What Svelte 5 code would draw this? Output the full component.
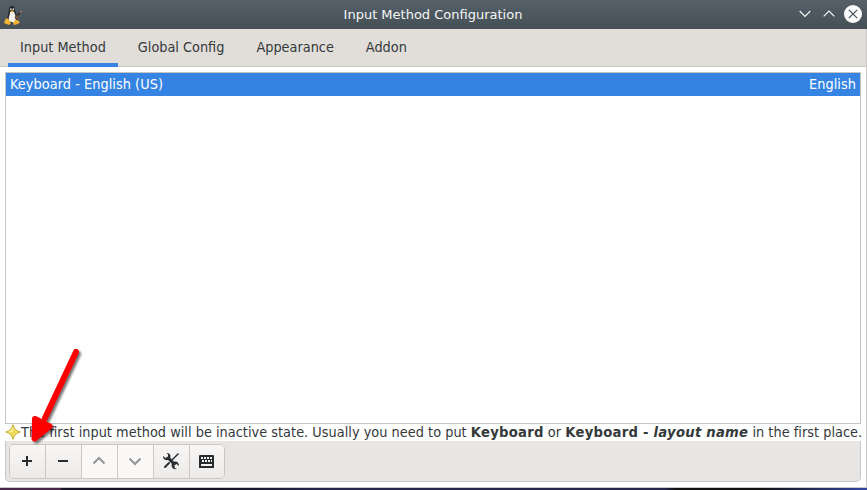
<script>
  const tabs = ['Input Method', 'Global Config', 'Appearance', 'Addon'];
  const tools = ['add', 'remove', 'up', 'down', 'configure', 'keyboard'];
</script>

<div class="screen">
  <div class="window">
    <header>
      <svg class="tux" width="22" height="22" viewBox="0 0 22 22">
        <path d="M7 5C7 1 13 1 13 5C13 9 16 11 15 17L12 20L6 18C4 13 7 10 7 5Z" fill="#202426" />
        <path d="M8 8L12 8C14 12 15 16 12 19L7 17C6 13 8 12 8 8Z" fill="#f3f2ed" />
        <circle cx="8.8" cy="5.2" r=".9" fill="#d8d8cf" /><circle cx="11.4" cy="5.2" r=".9" fill="#d8d8cf" />
        <path d="M8 7L10 6.2L12.5 7L10 8.5Z" fill="#e8b54e" />
        <path d="M5 14L3 16L2 19L7 21L9 19L7 16ZM13 16L11 19L12 21L16 20L18 18L15 16Z" fill="#f1b336" />
        <path d="M13 14L19 7.5" stroke="#302b28" stroke-width="1.3" />
        <path d="M13 14L15 11L17 13L15 16Z" fill="#71513a" />
        <path d="M18 8.5L20 7" stroke="#a98266" stroke-width="1.3" />
      </svg>
      <h1>Input Method Configuration</h1>
      <div class="controls">
        <svg width="12" height="8" viewBox="0 0 12 8"><path d="M.7 1L6 6.3L11.3 1" /></svg>
        <svg width="12" height="8" viewBox="0 0 12 8"><path d="M.7 6.3L6 1L11.3 6.3" /></svg>
        <svg class="close" width="18" height="18" viewBox="0 0 18 18"><circle cx="9" cy="9" r="9" /><path d="M4.8 4.8L13.2 13.2M13.2 4.8L4.8 13.2" /></svg>
      </div>
    </header>
    <nav>
      {#each tabs as tab, i}
        <button class="tab" class:active={i === 0}>{tab}</button>
      {/each}
    </nav>
    <main>
      <section class="methods">
        <div class="row"><span>Keyboard - English (US)</span><span>English</span></div>
      </section>
      <div class="hint">
        <svg width="16" height="16" viewBox="0 0 16 16"><path d="M8 .7C8.8 4.6 11.2 7 15.3 8C11.2 9 8.8 11.4 8 15.3C7.2 11.4 4.8 9 .7 8C4.8 7 7.2 4.6 8 .7Z" fill="#f0dc5b" stroke="#c5aa2d" /><path d="M7.8 4L7 7L4 8" fill="none" stroke="#fff6a7" stroke-width="1.3" /></svg>
        <p>The first input method will be inactive state. Usually you need to put <b>Keyboard</b> or <b>Keyboard - <i>layout name</i></b> in the first place.</p>
      </div>
      <footer>
        <div class="tools">
          {#each tools as tool}
            <button class:disabled={tool === 'up' || tool === 'down'} aria-label={tool}>
              <svg width="18" height="18" viewBox="0 0 18 18">
                {#if tool === 'add'}
                  <path d="M4 9H14M9 4V14" />
                {:else if tool === 'remove'}
                  <path d="M4 9H14" />
                {:else if tool === 'up'}
                  <path d="M3.5 11.5L9 6L14.5 11.5" />
                {:else if tool === 'down'}
                  <path d="M3.5 6.5L9 12L14.5 6.5" />
                {:else if tool === 'configure'}
                  <path class="fill" d="M4.5 1C7.5 1 9 3 8.3 5.8L12 9.7C15 9 17 11 17 14L14.5 12L12.3 13.5L13 16.2L15 17C11 18 9 15 9.8 11.8L6 8C3 8.7 1 7 1 4L3.5 6L6 4.5L6 2.2Z" />
                  <path class="driver" d="M16.5 1.5L9 9" />
                  <path d="M7 11L3 15" stroke-width="3" stroke-linecap="round" />
                {:else}
                  <path class="fill" d="M2 3H15Q16 3 16 4V16H1V4Q1 3 2 3Z" />
                  <path class="keys" d="M3 6H14M4 9H14" />
                  <path class="space" d="M3 13H14" />
                {/if}
              </svg>
            </button>
          {/each}
        </div>
      </footer>
    </main>
  </div>
  <div class="desktop"></div>
  <svg class="arrow" width="58" height="104" viewBox="0 0 58 104">
    <path d="M51 9L20 75" fill="none" stroke="#f00" stroke-width="6" stroke-linecap="round" />
    <path d="M10 76L24.5 83.5L9.5 95.5Z" fill="#f00" stroke="#f00" stroke-width="6" stroke-linejoin="round" />
  </svg>
</div>

<style>
  .screen { width: 867px; height: 490px; position: relative; overflow: hidden; font-family: "DejaVu Sans Condensed", "DejaVu Sans", sans-serif; font-stretch: condensed; font-size: 14.33px; color: #34393b; }
  .window { box-sizing: border-box; height: 488px; display: flex; flex-direction: column; background: #fff; border-right: 1px solid #cbc9c7; border-bottom: 1px solid #cbc8cc; }
  header { height: 29px; display: flex; align-items: center; position: relative; background: linear-gradient(#566069, #454f55); margin-right: -1px; flex: none; }
  .tux { margin: 1px 0 0 2px; }
  h1 { flex: 1; margin: 0 0 0 -24px; text-align: center; font: 13px "DejaVu Sans", sans-serif; color: #f4f6f7; }
  .controls { display: flex; gap: 12px; align-items: center; margin: -1px 0 0 -67px; padding-right: 5px; }
  .controls path { fill: none; stroke: #f5f7f8; stroke-width: 1.2; }
  .close { margin-left: -3px; }
  .close circle { fill: #fcfcfc; }
  .controls .close path { stroke: #444e54; }
  nav { height: 37px; flex: none; display: flex; padding-left: 8px; background: #e1deda; border-bottom: 1px solid #cdc9c5; }
  button { font: inherit; color: inherit; margin: 0; }
  .tab { height: 38px; padding: 0 12px 2px; margin-right: 8px; border: 0; background: none; white-space: nowrap; }
  .tab.active { box-shadow: inset 0 -4px #3584e4; }
  main { padding: 5px; display: flex; flex-direction: column; flex: 1; box-sizing: border-box; }
  .methods { height: 350px; border: 1px solid #c7c5c3; flex: none; }
  .row { height: 23px; box-sizing: border-box; display: flex; justify-content: space-between; align-items: center; padding: 0 4px 2px; background: #3584e4; color: #fff; letter-spacing: .06px; }
  .hint { height: 17px; display: flex; align-items: center; white-space: nowrap; }
  .hint svg { flex: none; margin-top: -1px; }
  .hint p { margin: 0; line-height: 17px; letter-spacing: .03px; }
  .hint b { font-size: 14.67px; line-height: 1; letter-spacing: .26px; }
  footer { height: 40px; box-sizing: content-box; border: 1px solid #c9c7c3; border-top: 0; border-radius: 0 0 5px 5px; background: #e8e6e4; padding-left: 3px; }
  .tools { display: flex; width: 214px; height: 33px; margin-top: 3px; border: 1px solid #cbc7c3; border-radius: 5px; overflow: hidden; }
  .tools button { width: 36px; height: 33px; box-sizing: border-box; padding: 0 1px 1px 0; border: 0; border-right: 1px solid #cbc7c3; display: grid; place-items: center; background: linear-gradient(#f7f6f5, #edebe9); flex: none; }
  .tools button:last-child { border-right: 0; width: 34px; }
  .tools .disabled { background: #faf9f8; color: #929595; }
  .tools svg { display: block; color: inherit; }
  .tools button:not(.disabled) { color: #272c2e; }
  .tools path { fill: none; stroke: currentColor; stroke-width: 2; }
  .tools path.fill { fill: currentColor; stroke: none; }
  .tools path.driver { stroke-width: 1.5; }
  .tools path.keys { stroke: #f4f3f2; stroke-dasharray: 2 1; }
  .tools path.space { stroke: #f4f3f2; }
  .desktop { height: 2px; background: linear-gradient(90deg, #482649 0 60px, #171426 62px 225px, #24264e 330px 665px, #111 675px 760px, #3446a0); }
  .arrow { position: absolute; left: 25px; top: 343px; filter: drop-shadow(2px 2px 1px #0008); pointer-events: none; }
</style>
